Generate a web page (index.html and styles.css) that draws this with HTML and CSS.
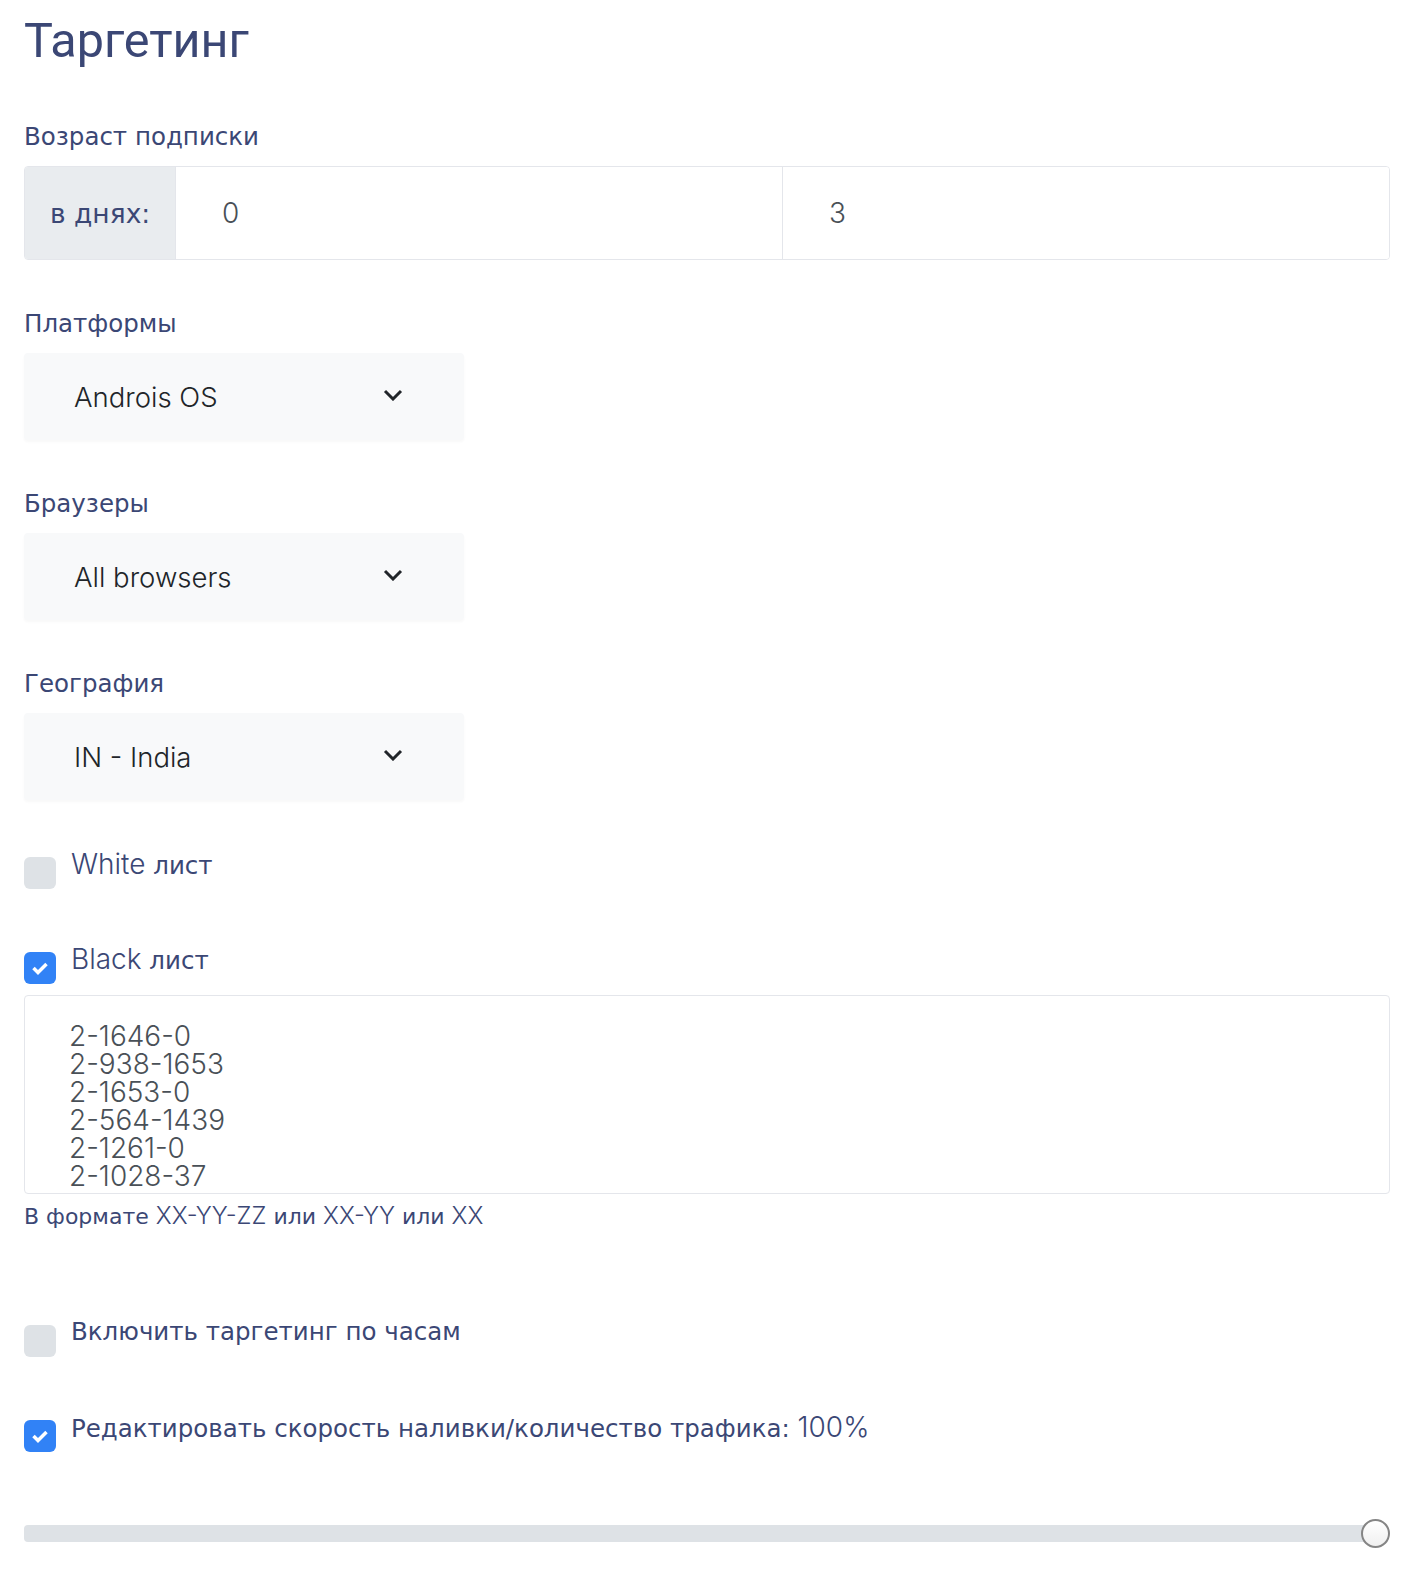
FILE: index.html
```html
<!DOCTYPE html>
<html lang="ru">
<head>
    <meta charset="UTF-8">
    <meta name="viewport" content="width=device-width, initial-scale=1.0">
    <link rel="stylesheet" href="styles.css">
</head>

<body>
    <div class="page">
        <h1 class="title">Таргетинг</h1>

        <div class="form-group">
            <label class="field-label">Возраст подписки</label>
            <div class="input-group">
                <span class="addon">в днях:</span>
                <input type="text" class="group-input" value="0">
                <input type="text" class="group-input" value="3">
            </div>
        </div>

        <div class="form-group">
            <label class="field-label">Платформы</label>
            <div class="select-box">
                <span class="select-value">Androis OS</span>
                <svg class="chevron" width="20" height="12" viewBox="0 0 20 12"><path d="M2 2l8 8 8-8" fill="none" stroke="#212529" stroke-width="3"/></svg>
            </div>
        </div>

        <div class="form-group">
            <label class="field-label">Браузеры</label>
            <div class="select-box">
                <span class="select-value">All browsers</span>
                <svg class="chevron" width="20" height="12" viewBox="0 0 20 12"><path d="M2 2l8 8 8-8" fill="none" stroke="#212529" stroke-width="3"/></svg>
            </div>
        </div>

        <div class="form-group">
            <label class="field-label">География</label>
            <div class="select-box">
                <span class="select-value">IN - India</span>
                <svg class="chevron" width="20" height="12" viewBox="0 0 20 12"><path d="M2 2l8 8 8-8" fill="none" stroke="#212529" stroke-width="3"/></svg>
            </div>
        </div>

        <label class="check-row white-row">
            <span class="check-box"></span>
            <span class="check-text"><span class="lt">White</span> лист</span>
        </label>

        <label class="check-row black-row">
            <span class="check-box checked">
                <svg width="18" height="14" viewBox="0 0 18 14"><path d="M2.5 7l4.5 4.5 8.5-8.5" fill="none" stroke="#fff" stroke-width="3.5"/></svg>
            </span>
            <span class="check-text"><span class="lt">Black</span> лист</span>
        </label>
        <textarea class="list-area" rows="6">2-1646-0
2-938-1653
2-1653-0
2-564-1439
2-1261-0
2-1028-37</textarea>
        <div class="help-text">В формате <span class="lt">XX-YY-ZZ</span> или <span class="lt">XX-YY</span> или <span class="lt">XX</span></div>

        <label class="check-row hours-row">
            <span class="check-box"></span>
            <span class="check-text">Включить таргетинг по часам</span>
        </label>

        <label class="check-row">
            <span class="check-box checked">
                <svg width="18" height="14" viewBox="0 0 18 14"><path d="M2.5 7l4.5 4.5 8.5-8.5" fill="none" stroke="#fff" stroke-width="3.5"/></svg>
            </span>
            <span class="check-text">Редактировать скорость наливки/количество трафика: <span class="lt">100%</span></span>
        </label>

        <div class="slider">
            <div class="slider-track"></div>
            <div class="slider-thumb"></div>
        </div>
    </div>
</body>
</html>
```

FILE: styles.css
```css
body {
    margin: 0px;
    padding: 0px;
    background-color: #ffffff;
}

.page {
    padding: 10px 28px 40px 24px;
    font-family: "DejaVu Sans", "Open Sans", sans-serif;
    color: #3b4775;
}

.lt {
    font-family: Inter, "Open Sans", sans-serif;
    font-weight: 300;
}

.title {
    font-family: Roboto, "Liberation Sans", sans-serif;
    font-size: 48.5px;
    font-weight: 400;
    line-height: 61px;
    margin: 0px 0px 51px 0px;
}

.form-group {
    margin-bottom: 49px;
}

.field-label {
    display: block;
    font-size: 24.5px;
    line-height: 30px;
    margin-bottom: 14px;
}

.input-group {
    display: flex;
    height: 94px;
    border: 1px solid #e4e6eb;
    border-radius: 4px;
    box-sizing: border-box;
    overflow: hidden;
}

.addon {
    width: 151px;
    background-color: #e9ecef;
    display: flex;
    align-items: center;
    padding-left: 25px;
    box-sizing: border-box;
    font-size: 26.5px;
    border-right: 1px solid #e4e6eb;
}

.group-input {
    flex: 1;
    min-width: 0px;
    border: none;
    outline: none;
    padding: 0px 0px 0px 46px;
    font-family: Inter, sans-serif;
    font-weight: 300;
    font-size: 28px;
    color: #495057;
}

.group-input + .group-input {
    border-left: 1px solid #e4e6eb;
}

.select-box {
    width: 440px;
    height: 87px;
    background-color: #f8f9fa;
    border-radius: 4px;
    box-shadow: 0px 2px 3px rgba(0, 0, 0, 0.03);
    display: flex;
    align-items: center;
    justify-content: space-between;
    padding: 0px 61px 0px 50px;
    box-sizing: border-box;
}

.select-value {
    font-family: Inter, sans-serif;
    font-weight: 300;
    font-size: 27.5px;
    color: #212529;
}

.chevron {
    display: block;
    margin-top: -4px;
}

.check-row {
    display: flex;
    align-items: flex-start;
    gap: 15px;
    margin-bottom: 55px;
}

.check-box {
    width: 32px;
    height: 32px;
    border-radius: 6px;
    background-color: #dee2e6;
    margin-top: 8px;
    flex-shrink: 0;
    display: flex;
    align-items: center;
    justify-content: center;
}

.check-box.checked {
    background-color: #3182f6;
}

.check-text {
    font-size: 24.5px;
    line-height: 30px;
}

.check-text .lt {
    font-size: 28px;
}

.white-row {
    margin-top: 4px;
}

.black-row {
    margin-bottom: 11px;
}

.list-area {
    display: block;
    width: 100%;
    height: 199px;
    box-sizing: border-box;
    border: 1px solid #e4e6eb;
    border-radius: 4px;
    padding: 26px 0px 0px 44px;
    font-family: Inter, sans-serif;
    font-weight: 300;
    font-size: 28px;
    line-height: 28px;
    color: #495057;
    resize: none;
    overflow: hidden;
    outline: none;
}

.help-text {
    margin-top: 8px;
    font-size: 22px;
    line-height: 27px;
}

.help-text .lt {
    font-size: 24px;
}

.hours-row {
    margin-top: 87px;
}

.slider {
    display: flex;
    align-items: center;
    margin-top: 67px;
}

.slider-track {
    flex: 1;
    height: 17px;
    background-color: #dee2e6;
    border-radius: 4px;
}

.slider-thumb {
    width: 25px;
    height: 25px;
    border-radius: 50%;
    border: 2px solid #858585;
    background: linear-gradient(#ffffff, #f0f0f0);
    margin-left: -14px;
}
```
